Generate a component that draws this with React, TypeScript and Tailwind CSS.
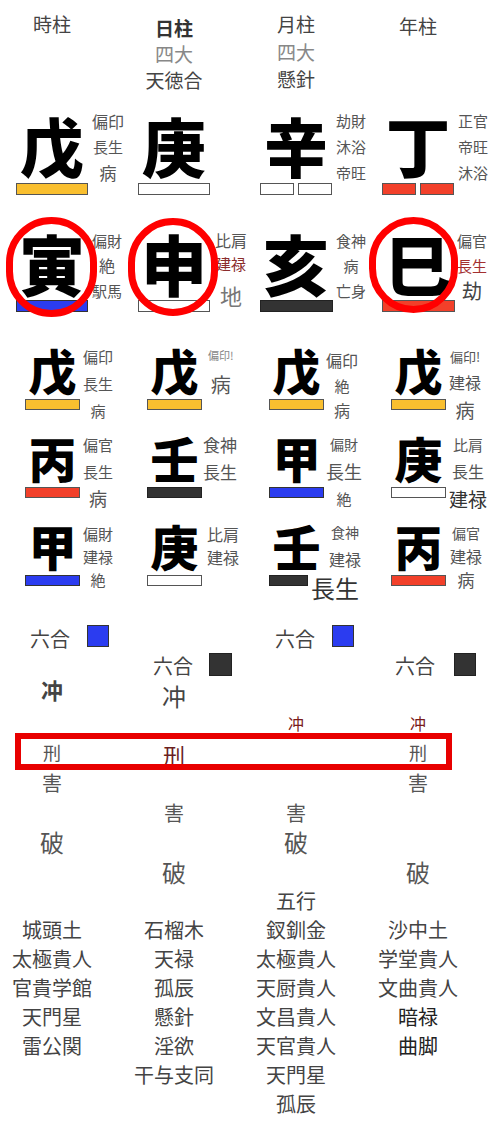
import React from "react";

const ROW = "grid grid-cols-[repeat(4,122px)] -ml-[9px]";

function Ring({ cls }: { cls: string }) {
  return <div className={cls} />;
}

export default function App() {
  return (
    <div className="w-[502px] h-[1125px] bg-white overflow-hidden relative whitespace-nowrap font-['Noto_Sans_CJK_JP','Noto_Sans',sans-serif] text-[#444]">
      {/* Header */}
      <div className={`${ROW} h-[110px]`}>
        <div className="flex flex-col items-center pt-[10px] text-[19px] leading-[27px] text-[#444]">
          <span>時柱</span>
        </div>
        <div className="flex flex-col items-center pt-[15px] text-[19px] leading-[26px]">
          <span className="font-bold text-[#333]">日柱</span>
          <span className="text-[#888]">四大</span>
          <span className="text-[#444]">天徳合</span>
        </div>
        <div className="flex flex-col items-center pt-[10px] text-[19px] leading-[27.5px]">
          <span className="text-[#444]">月柱</span>
          <span className="text-[#888]">四大</span>
          <span className="text-[#444]">懸針</span>
        </div>
        <div className="flex flex-col items-center pt-[12px] text-[19px] leading-[27px] text-[#444]">
          <span>年柱</span>
        </div>
      </div>

      {/* Heavenly stems */}
      <div className={`${ROW} h-[117px]`}>
        <div className="flex pl-[25px]">
          <div className="flex flex-col items-center w-[72px] shrink-0">
            <div className="text-[64px] leading-[68px] font-black text-black">戊</div>
            <div className="w-[72px] h-[12px] mt-[5px] bg-[#f9bf2f] border border-[#555]" />
          </div>
          <div className="flex flex-col items-center shrink-0 ml-[4px] -mt-[2px] text-[#555] leading-[26px]">
            <span className="text-[16px]">偏印</span>
            <span className="text-[15px]">長生</span>
            <span className="text-[17px]">病</span>
          </div>
        </div>
        <div className="flex pl-[25px]">
          <div className="flex flex-col items-center w-[72px] shrink-0">
            <div className="text-[64px] leading-[68px] font-black text-black">庚</div>
            <div className="w-[72px] h-[12px] mt-[5px] bg-white border border-[#555]" />
          </div>
        </div>
        <div className="flex pl-[25px]">
          <div className="flex flex-col items-center w-[72px] shrink-0">
            <div className="text-[64px] leading-[68px] font-black text-black">辛</div>
            <div className="flex gap-[4px] mt-[5px]">
              <div className="w-[34px] h-[12px] bg-white border border-[#555]" />
              <div className="w-[34px] h-[12px] bg-white border border-[#555]" />
            </div>
          </div>
          <div className="flex flex-col items-center shrink-0 ml-[4px] -mt-[2px] text-[#555] leading-[26px] text-[15px]">
            <span>劫財</span>
            <span>沐浴</span>
            <span>帝旺</span>
          </div>
        </div>
        <div className="flex pl-[25px]">
          <div className="flex flex-col items-center w-[72px] shrink-0">
            <div className="text-[64px] leading-[68px] font-black text-black">丁</div>
            <div className="flex gap-[4px] mt-[5px]">
              <div className="w-[34px] h-[12px] bg-[#f2402a] border border-[#555]" />
              <div className="w-[34px] h-[12px] bg-[#f2402a] border border-[#555]" />
            </div>
          </div>
          <div className="flex flex-col items-center shrink-0 ml-[4px] -mt-[2px] text-[#555] leading-[26px] text-[15px]">
            <span>正官</span>
            <span>帝旺</span>
            <span>沐浴</span>
          </div>
        </div>
      </div>

      {/* Earthly branches */}
      <div className={`${ROW} h-[116px]`}>
        <div className="flex pl-[25px]">
          <div className="relative flex flex-col items-center w-[72px] shrink-0">
            <div className="text-[66px] leading-[70px] font-black text-black">寅</div>
            <div className="w-[72px] h-[12px] mt-[3px] bg-[#2b3cf0] border border-[#333]" />
            <Ring cls="absolute left-[-10px] top-[-10px] w-[91px] h-[100px] rounded-full border-[7px] border-[#ff0000]" />
          </div>
          <div className="flex flex-col items-center shrink-0 ml-[4px] pt-[1px] text-[#555] leading-[25px]">
            <span className="text-[15px]">偏財</span>
            <span className="text-[16px]">絶</span>
            <span className="text-[15px]">駅馬</span>
          </div>
        </div>
        <div className="flex pl-[25px]">
          <div className="relative flex flex-col items-center w-[72px] shrink-0">
            <div className="text-[66px] leading-[70px] font-black text-black">申</div>
            <div className="w-[72px] h-[12px] mt-[3px] bg-white border border-[#555]" />
            <Ring cls="absolute left-[-10px] top-[-9px] w-[90px] h-[98px] rounded-full border-[7px] border-[#ff0000]" />
          </div>
          <div className="flex flex-col items-center shrink-0 ml-[5px] pt-[2px] text-[#555] leading-[23px]">
            <span className="text-[16px]">比肩</span>
            <span className="text-[15px] text-[#8b2c2c]">建禄</span>
            <span className="text-[22px] leading-[40px] text-[#777]">地</span>
          </div>
        </div>
        <div className="flex pl-[25px]">
          <div className="relative flex flex-col items-center w-[72px] shrink-0">
            <div className="text-[66px] leading-[70px] font-black text-black">亥</div>
            <div className="w-[73px] h-[12px] mt-[3px] bg-[#333] border border-[#222]" />
          </div>
          <div className="flex flex-col items-center shrink-0 ml-[4px] pt-[1px] text-[#555] leading-[25px] text-[15px]">
            <span>食神</span>
            <span>病</span>
            <span>亡身</span>
          </div>
        </div>
        <div className="flex pl-[25px]">
          <div className="relative flex flex-col items-center w-[72px] shrink-0">
            <div className="text-[66px] leading-[70px] font-black text-black">巳</div>
            <div className="w-[73px] h-[12px] mt-[3px] bg-[#f2402a] border border-[#555]" />
            <Ring cls="absolute left-[-13px] top-[-10px] w-[89px] h-[96px] rounded-full border-[7px] border-[#ff0000]" />
          </div>
          <div className="flex flex-col items-center shrink-0 ml-[3px] pt-[1px] text-[#555] leading-[25px]">
            <span className="text-[15px]">偏官</span>
            <span className="text-[15px] text-[#a33030]">長生</span>
            <span className="text-[20px] text-[#444]">劫</span>
          </div>
        </div>
      </div>

      {/* Hidden stems row 1 */}
      <div className={`${ROW} h-[88px]`}>
        <div className="flex pl-[34px]">
          <div className="flex flex-col items-center w-[55px] shrink-0">
            <div className="text-[48px] leading-[52px] font-black text-black">戊</div>
            <div className="w-[55px] h-[11px] mt-[4px] bg-[#f9bf2f] border border-[#555]" />
          </div>
          <div className="flex flex-col items-center shrink-0 ml-[3px] text-[#555] leading-[27px] text-[15px]">
            <span>偏印</span>
            <span>長生</span>
            <span>病</span>
          </div>
        </div>
        <div className="flex pl-[34px]">
          <div className="flex flex-col items-center w-[55px] shrink-0">
            <div className="text-[48px] leading-[52px] font-black text-black">戊</div>
            <div className="w-[55px] h-[11px] mt-[4px] bg-[#f9bf2f] border border-[#555]" />
          </div>
          <div className="flex flex-col items-center shrink-0 ml-[6px] text-[#555]">
            <span className="text-[11px] leading-[24px] text-[#888]">偏印!</span>
            <span className="text-[20px] leading-[36px]">病</span>
          </div>
        </div>
        <div className="flex pl-[34px]">
          <div className="flex flex-col items-center w-[55px] shrink-0">
            <div className="text-[48px] leading-[52px] font-black text-black">戊</div>
            <div className="w-[55px] h-[11px] mt-[4px] bg-[#f9bf2f] border border-[#555]" />
          </div>
          <div className="flex flex-col items-center shrink-0 ml-[2px] pt-[4px] text-[#555]">
            <span className="text-[16px] leading-[27px]">偏印</span>
            <span className="text-[15px] leading-[23px]">絶</span>
            <span className="text-[16px] leading-[27px]">病</span>
          </div>
        </div>
        <div className="flex pl-[34px]">
          <div className="flex flex-col items-center w-[55px] shrink-0">
            <div className="text-[48px] leading-[52px] font-black text-black">戊</div>
            <div className="w-[55px] h-[11px] mt-[4px] bg-[#f9bf2f] border border-[#555]" />
          </div>
          <div className="flex flex-col items-center shrink-0 ml-[3px] text-[#555]">
            <span className="text-[13px] leading-[27px]">偏印!</span>
            <span className="text-[16px] leading-[25px]">建禄</span>
            <span className="text-[19px] leading-[29px]">病</span>
          </div>
        </div>
      </div>

      {/* Hidden stems row 2 */}
      <div className={`${ROW} h-[88px]`}>
        <div className="flex pl-[34px]">
          <div className="flex flex-col items-center w-[55px] shrink-0">
            <div className="text-[48px] leading-[52px] font-black text-black">丙</div>
            <div className="w-[55px] h-[11px] mt-[4px] bg-[#f2402a] border border-[#555]" />
          </div>
          <div className="flex flex-col items-center shrink-0 ml-[3px] text-[#555] leading-[27px]">
            <span className="text-[15px]">偏官</span>
            <span className="text-[15px]">長生</span>
            <span className="text-[18px]">病</span>
          </div>
        </div>
        <div className="flex pl-[34px]">
          <div className="flex flex-col items-center w-[55px] shrink-0">
            <div className="text-[48px] leading-[52px] font-black text-black">壬</div>
            <div className="w-[55px] h-[11px] mt-[4px] bg-[#333] border border-[#222]" />
          </div>
          <div className="flex flex-col items-center shrink-0 ml-[1px] text-[#555] leading-[27px] text-[17px]">
            <span>食神</span>
            <span>長生</span>
          </div>
        </div>
        <div className="flex pl-[34px]">
          <div className="flex flex-col items-center w-[55px] shrink-0">
            <div className="text-[48px] leading-[52px] font-black text-black">甲</div>
            <div className="w-[55px] h-[11px] mt-[4px] bg-[#2b3cf0] border border-[#333]" />
          </div>
          <div className="flex flex-col items-center shrink-0 ml-[2px] text-[#555] leading-[27px]">
            <span className="text-[14px]">偏財</span>
            <span className="text-[18px]">長生</span>
            <span className="text-[15px]">絶</span>
          </div>
        </div>
        <div className="flex pl-[34px]">
          <div className="flex flex-col items-center w-[55px] shrink-0">
            <div className="text-[48px] leading-[52px] font-black text-black">庚</div>
            <div className="w-[55px] h-[11px] mt-[4px] bg-white border border-[#555]" />
          </div>
          <div className="flex flex-col items-center shrink-0 ml-[3px] text-[#555] leading-[27px]">
            <span className="text-[15px]">比肩</span>
            <span className="text-[16px]">長生</span>
            <span className="text-[19px] text-[#333]">建禄</span>
          </div>
        </div>
      </div>

      {/* Hidden stems row 3 */}
      <div className={`${ROW} h-[88px]`}>
        <div className="flex pl-[34px]">
          <div className="flex flex-col items-center w-[55px] shrink-0">
            <div className="text-[48px] leading-[52px] font-black text-black">甲</div>
            <div className="w-[55px] h-[11px] mt-[4px] bg-[#2b3cf0] border border-[#333]" />
          </div>
          <div className="flex flex-col items-center shrink-0 ml-[3px] pt-[3px] text-[#555] leading-[23px] text-[15px]">
            <span>偏財</span>
            <span>建禄</span>
            <span>絶</span>
          </div>
        </div>
        <div className="flex pl-[34px]">
          <div className="flex flex-col items-center w-[55px] shrink-0">
            <div className="text-[48px] leading-[52px] font-black text-black">庚</div>
            <div className="w-[55px] h-[11px] mt-[4px] bg-white border border-[#555]" />
          </div>
          <div className="flex flex-col items-center shrink-0 ml-[5px] pt-[4px] text-[#555] leading-[23px] text-[16px]">
            <span>比肩</span>
            <span>建禄</span>
          </div>
        </div>
        <div className="flex pl-[34px]">
          <div className="flex flex-col items-center w-[55px] shrink-0">
            <div className="text-[48px] leading-[52px] font-black text-black">壬</div>
            <div className="self-start w-[39px] h-[11px] mt-[4px] bg-[#333] border border-[#222]" />
          </div>
          <div className="flex flex-col items-center shrink-0 ml-[5px] text-[#555]">
            <span className="text-[14px] leading-[27px]">食神</span>
            <span className="text-[16px] leading-[27px]">建禄</span>
            <span className="text-[24px] leading-[30px] -ml-[20px] text-[#333]">長生</span>
          </div>
        </div>
        <div className="flex pl-[34px]">
          <div className="flex flex-col items-center w-[55px] shrink-0">
            <div className="text-[48px] leading-[52px] font-black text-black">丙</div>
            <div className="w-[55px] h-[11px] mt-[4px] bg-[#f2402a] border border-[#555]" />
          </div>
          <div className="flex flex-col items-center shrink-0 ml-[4px] pt-[3px] text-[#555] leading-[23px]">
            <span className="text-[14px]">偏官</span>
            <span className="text-[16px]">建禄</span>
            <span className="text-[17px]">病</span>
          </div>
        </div>
      </div>

      {/* Relations */}
      <div className="relative h-[279px]">
        <div className={`${ROW} h-[279px]`}>
          {/* col1 */}
          <div className="flex flex-col items-center">
            <div className="self-start flex items-start gap-[17px] pl-[39px] mt-[18px]">
              <span className="text-[20px] leading-[24px] mt-[2px] text-[#444]">六合</span>
              <div className="w-[22px] h-[22px] bg-[#2b3cf0] border border-[#333]" />
            </div>
            <span className="mt-[25px] text-[22px] leading-[26px] font-bold text-[#444]">冲</span>
            <span className="mt-[37.5px] text-[18px] leading-[24px] text-[#555]">刑</span>
            <span className="mt-[7.5px] text-[20px] leading-[24px] text-[#555]">害</span>
            <span className="mt-[32.5px] text-[24px] leading-[28px] text-[#555]">破</span>
          </div>
          {/* col2 */}
          <div className="flex flex-col items-center">
            <div className="self-start flex items-start gap-[16px] pl-[40px] mt-[46px]">
              <span className="text-[20px] leading-[24px] mt-[1px] text-[#444]">六合</span>
              <div className="w-[23px] h-[23px] bg-[#333] border border-[#222]" />
            </div>
            <span className="mt-[4px] text-[24px] leading-[28px] text-[#444]">冲</span>
            <span className="mt-[31px] text-[22px] leading-[26px] text-[#6b1f1f]">刑</span>
            <span className="mt-[33.5px] text-[20px] leading-[24px] text-[#555]">害</span>
            <span className="mt-[33px] text-[24px] leading-[28px] text-[#555]">破</span>
          </div>
          {/* col3 */}
          <div className="flex flex-col items-center">
            <div className="self-start flex items-start gap-[17px] pl-[40px] mt-[18px]">
              <span className="text-[20px] leading-[24px] mt-[2px] text-[#444]">六合</span>
              <div className="w-[22px] h-[22px] bg-[#2b3cf0] border border-[#333]" />
            </div>
            <span className="mt-[61.5px] text-[16px] leading-[20px] text-[#7a1a1a]">冲</span>
            <span className="mt-[68px] text-[20px] leading-[24px] text-[#555]">害</span>
            <span className="mt-[3px] text-[24px] leading-[28px] text-[#555]">破</span>
          </div>
          {/* col4 */}
          <div className="flex flex-col items-center">
            <div className="self-start flex items-start gap-[19px] pl-[38px] mt-[46px]">
              <span className="text-[20px] leading-[24px] mt-[1px] text-[#444]">六合</span>
              <div className="w-[22px] h-[23px] bg-[#333] border border-[#222]" />
            </div>
            <span className="mt-[34.5px] text-[16px] leading-[20px] text-[#7a1a1a]">冲</span>
            <span className="mt-[7px] text-[18px] leading-[24px] text-[#555]">刑</span>
            <span className="mt-[7.5px] text-[20px] leading-[24px] text-[#555]">害</span>
            <span className="mt-[62.5px] text-[24px] leading-[28px] text-[#555]">破</span>
          </div>
        </div>
        <div className="absolute left-[15px] top-[126px] w-[437px] h-[37px] border-[6px] border-[#e80000]" />
      </div>

      {/* Stars */}
      <div className={`${ROW} text-[20px] leading-[29px] text-[#444]`}>
        <div className="flex flex-col items-center pt-[29px]">
          <span>城頭土</span>
          <span>太極貴人</span>
          <span>官貴学館</span>
          <span>天門星</span>
          <span>雷公関</span>
        </div>
        <div className="flex flex-col items-center pt-[29px]">
          <span>石榴木</span>
          <span>天禄</span>
          <span>孤辰</span>
          <span>懸針</span>
          <span>淫欲</span>
          <span>干与支同</span>
        </div>
        <div className="flex flex-col items-center">
          <span>五行</span>
          <span>釵釧金</span>
          <span>太極貴人</span>
          <span>天厨貴人</span>
          <span>文昌貴人</span>
          <span>天官貴人</span>
          <span>天門星</span>
          <span>孤辰</span>
        </div>
        <div className="flex flex-col items-center pt-[29px]">
          <span>沙中土</span>
          <span>学堂貴人</span>
          <span>文曲貴人</span>
          <span className="text-[#222]">暗禄</span>
          <span className="text-[#222]">曲脚</span>
        </div>
      </div>
    </div>
  );
}
